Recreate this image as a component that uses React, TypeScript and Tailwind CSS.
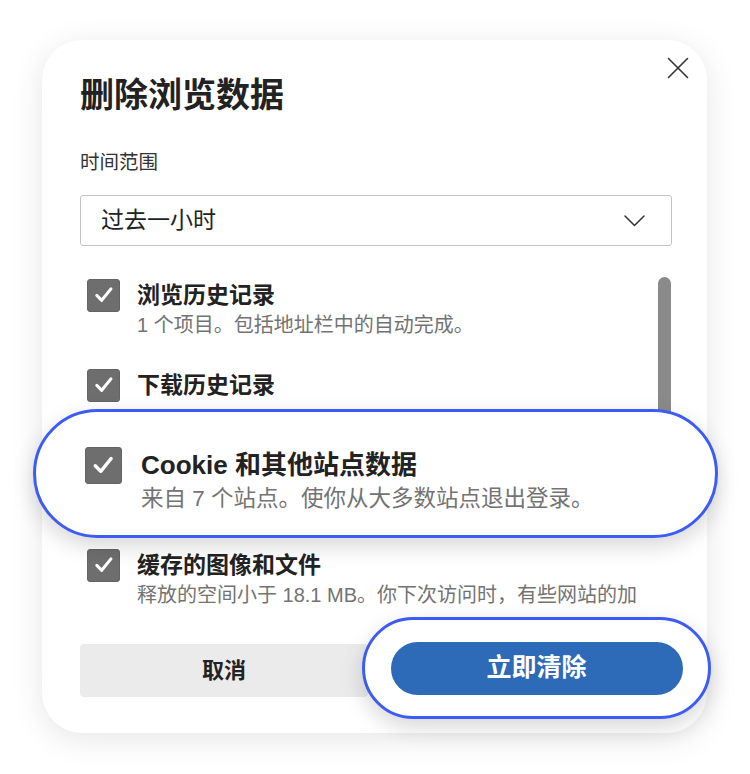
import React from "react";

function Check({ size = 33 }: { size?: number }) {
  return (
    <div
      className="shrink-0 rounded-[3px] bg-[#6e6e6e] border border-[#646464] flex items-center justify-center"
      style={{ width: size, height: size }}
    >
      <svg width={size * 0.66} height={size * 0.66} viewBox="0 0 20 20" fill="none">
        <path d="M3.5 10.5 L8 15 L16.5 4.5" stroke="#ffffff" strokeWidth="2.8" strokeLinecap="round" strokeLinejoin="round" />
      </svg>
    </div>
  );
}

function Item({ title, sub, hidden }: { title: string; sub: string; hidden?: boolean }) {
  return (
    <div className={"flex items-start gap-[17px] pl-[7px]" + (hidden ? " invisible" : "")}>
      <div className="h-[30px] flex items-center">
        <Check />
      </div>
      <div className="flex flex-col min-w-0">
        <div className="text-[23px] leading-[30px] font-bold text-[#222222] whitespace-nowrap">{title}</div>
        <div className="mt-[2px] text-[20px] leading-[26px] text-[#737373] whitespace-nowrap">{sub}</div>
      </div>
    </div>
  );
}

export default function App() {
  return (
    <div className="relative w-[750px] h-[774px] bg-white overflow-hidden font-['Liberation_Sans','Noto_Sans_CJK_SC',sans-serif]">
      <div className="relative ml-[42px] mt-[40px] w-[665px] h-[693px] rounded-[40px] bg-white shadow-[0_6px_32px_rgba(0,0,0,0.10)] pl-[38px] pr-[35px] pt-[35px] pb-[36px] flex flex-col">
        <button className="absolute right-[17px] top-[16px] w-[24px] h-[24px] flex items-center justify-center">
          <svg width="22" height="22" viewBox="0 0 22 22" fill="none">
            <path d="M1.5 1.5 L20.5 20.5 M20.5 1.5 L1.5 20.5" stroke="#333333" strokeWidth="1.6" strokeLinecap="round" />
          </svg>
        </button>
        <h1 className="text-[34px] leading-[40px] font-bold text-[#222222]">删除浏览数据</h1>
        <div className="mt-[34px] text-[19.5px] leading-[26px] text-[#333333]">时间范围</div>
        <div className="mt-[20px] h-[51px] border border-[#c4c4c4] rounded-[3px] flex items-center justify-between pl-[20px] pr-[26px]">
          <span className="text-[23px] text-[#222222]">过去一小时</span>
          <svg width="21" height="12" viewBox="0 0 21 12" fill="none">
            <path d="M1 1 L10.5 10.5 L20 1" stroke="#333333" strokeWidth="1.5" strokeLinecap="round" strokeLinejoin="round" />
          </svg>
        </div>
        <div className="mt-[22px] h-[352px] flex overflow-hidden">
          <div className="w-[562px] overflow-hidden pt-[12px] flex flex-col gap-[32px]">
            <Item title="浏览历史记录" sub="1 个项目。包括地址栏中的自动完成。" />
            <div className="flex items-start gap-[17px] pl-[7px]">
              <div className="h-[30px] flex items-center">
                <Check />
              </div>
              <div className="flex flex-col min-w-0">
                <div className="text-[23px] leading-[30px] font-bold text-[#222222] whitespace-nowrap">下载历史记录</div>
                <div className="mt-[2px] h-[26px]" />
              </div>
            </div>
            <Item title="Cookie 和其他站点数据" sub="来自 7 个站点。使你从大多数站点退出登录。" hidden />
            <Item title="缓存的图像和文件" sub="释放的空间小于 18.1 MB。你下次访问时，有些网站的加" />
          </div>
          <div className="ml-[16px] pt-[9px]">
            <div className="w-[13px] h-[210px] rounded-full bg-[#8a8a8a]" />
          </div>
        </div>
        <div className="mt-[24px] flex gap-[13px]">
          <button className="w-[288px] h-[53px] rounded-[4px] bg-[#ebebeb] text-[22px] font-bold text-[#222222]">取消</button>
          <div className="w-[288px] h-[53px] rounded-full bg-[#2d6ab8]" />
        </div>
      </div>

      <div className="absolute left-[33px] top-[409px] w-[685px] h-[129px] rounded-full border-[3px] border-[#3d5cf6] bg-white shadow-[0_8px_22px_rgba(0,0,0,0.16)] pl-[49px] pt-[36px] flex items-start gap-[19px]">
        <div className="h-[34px] flex items-center">
          <Check size={37} />
        </div>
        <div className="flex flex-col">
          <div className="text-[26px] leading-[34px] font-bold text-[#222222] whitespace-nowrap">Cookie 和其他站点数据</div>
          <div className="mt-[2px] text-[22.5px] leading-[30px] text-[#737373] whitespace-nowrap">来自 7 个站点。使你从大多数站点退出登录。</div>
        </div>
      </div>

      <div className="absolute left-[362px] top-[617px] w-[349px] h-[102px] rounded-full border-[3px] border-[#3d5cf6] bg-white shadow-[0_8px_22px_rgba(0,0,0,0.16)] flex items-center justify-center">
        <button className="w-[292px] h-[53px] rounded-full bg-[#2d6ab8] text-[25px] font-bold text-white">立即清除</button>
      </div>
    </div>
  );
}
